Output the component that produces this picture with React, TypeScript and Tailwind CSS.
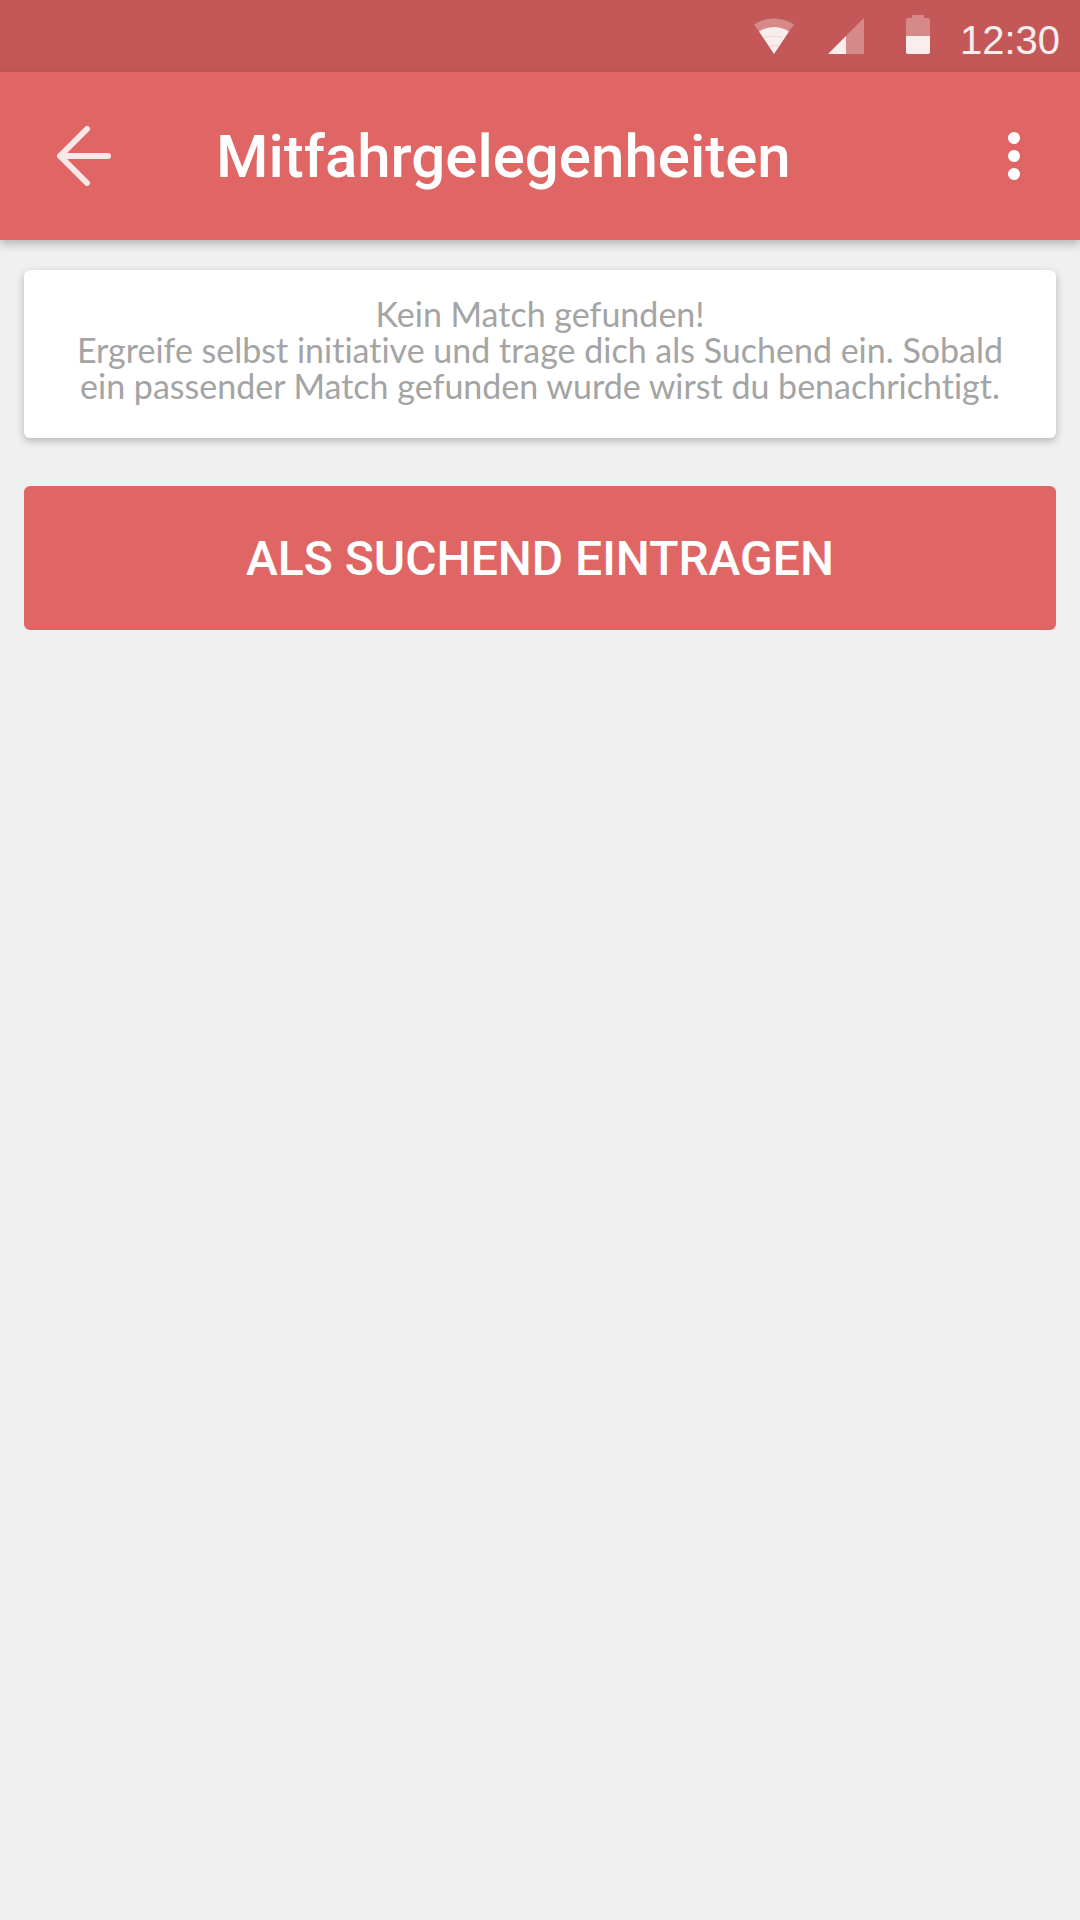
function WifiIcon() {
  return (
    <svg className="h-10 w-10" viewBox="0 0 40 40" aria-hidden="true">
      <path d="M0 6.5A36 36 0 0 1 40 6.5L35 13.5A27 27 0 0 0 5 13.5Z" fill="#fff" fillOpacity="0.3" />
      <path d="M5 13.5A27 27 0 0 1 35 13.5L20 36Z" fill="#fff" fillOpacity="0.9" />
      <path d="M11 19.5Q20 17 29 19.5M16 28Q20 27 24 28" fill="none" stroke="#f0cfcf" strokeWidth="1" strokeDasharray="5 1" />
    </svg>
  );
}

function SignalIcon() {
  return (
    <svg className="h-10 w-9" viewBox="0 0 36 40" aria-hidden="true">
      <path d="M18 18L36 0V36H18Z" fill="#fff" fillOpacity="0.3" />
      <path d="M0 36L18 18V36Z" fill="#fff" fillOpacity="0.9" />
    </svg>
  );
}

function BatteryIcon() {
  return (
    <svg className="h-10 w-6 overflow-visible" viewBox="0 0 24 40" aria-hidden="true">
      <path d="M0 18V2Q0 0 2 0H6V-3H18V0H22Q24 0 24 2V18Z" fill="#fff" fillOpacity="0.3" />
      <path d="M0 18H24V34Q24 36 22 36H2Q0 36 0 34Z" fill="#fff" fillOpacity="0.9" />
    </svg>
  );
}

function StatusBar() {
  return (
    <div className="flex h-[72px] items-center justify-end bg-[#c45757] pr-5 pt-1">
      <WifiIcon />
      <span className="w-[34px]" />
      <SignalIcon />
      <span className="w-[42px]" />
      <BatteryIcon />
      <time className="w-[130px] pt-1 text-right font-['Liberation_Sans',Arial,sans-serif] text-[40px] leading-10 text-white/90">12:30</time>
    </div>
  );
}

function AppBar() {
  return (
    <header className="relative flex h-[168px] items-center bg-[#e06666] px-9 text-white shadow-[0_4px_9px_rgba(0,0,0,0.25)]">
      <button type="button" aria-label="Zurück" className="flex size-24 items-center justify-center">
        <svg className="h-[60px] w-[54px]" viewBox="0 0 54 60" fill="none" stroke="#fae8e8" strokeWidth="6" strokeLinecap="round" strokeLinejoin="round">
          <path d="M30 3L3 30L30 57M3 30H51" />
        </svg>
      </button>
      <h1 className="ml-[84px] flex-1 pt-0.5 text-[60px] leading-[72px] font-medium">Mitfahrgelegenheiten</h1>
      <button type="button" aria-label="Menü" className="flex h-24 w-[60px] items-center justify-center">
        <svg className="h-12 w-3" viewBox="0 0 12 48" fill="currentColor">
          <circle cx="6" cy="6" r="6" />
          <circle cx="6" cy="24" r="6" />
          <circle cx="6" cy="42" r="6" />
        </svg>
      </button>
    </header>
  );
}

export default function App() {
  return (
    <div className="min-h-screen bg-[#f0f0f0] font-[Roboto,sans-serif]">
      <StatusBar />
      <AppBar />
      <main className="flex flex-col gap-12 px-6 pt-[30px]">
        <section className="rounded-md bg-white px-10 pt-[26px] pb-[34px] shadow-[0_3px_9px_rgba(0,0,0,0.25)]">
          <p className="text-center font-[Lato,'Open_Sans',sans-serif] text-[34px] leading-9 text-[#a4a4a4] [font-variant-ligatures:none]">
            Kein Match gefunden!
            <br />
            Ergreife selbst initiative und trage dich als Suchend ein. Sobald ein passender Match gefunden wurde wirst du benachrichtigt.
          </p>
        </section>
        <button type="button" className="h-36 rounded-md bg-[#e06666] pt-0.5 text-5xl font-medium text-white">
          ALS SUCHEND EINTRAGEN
        </button>
      </main>
    </div>
  );
}
